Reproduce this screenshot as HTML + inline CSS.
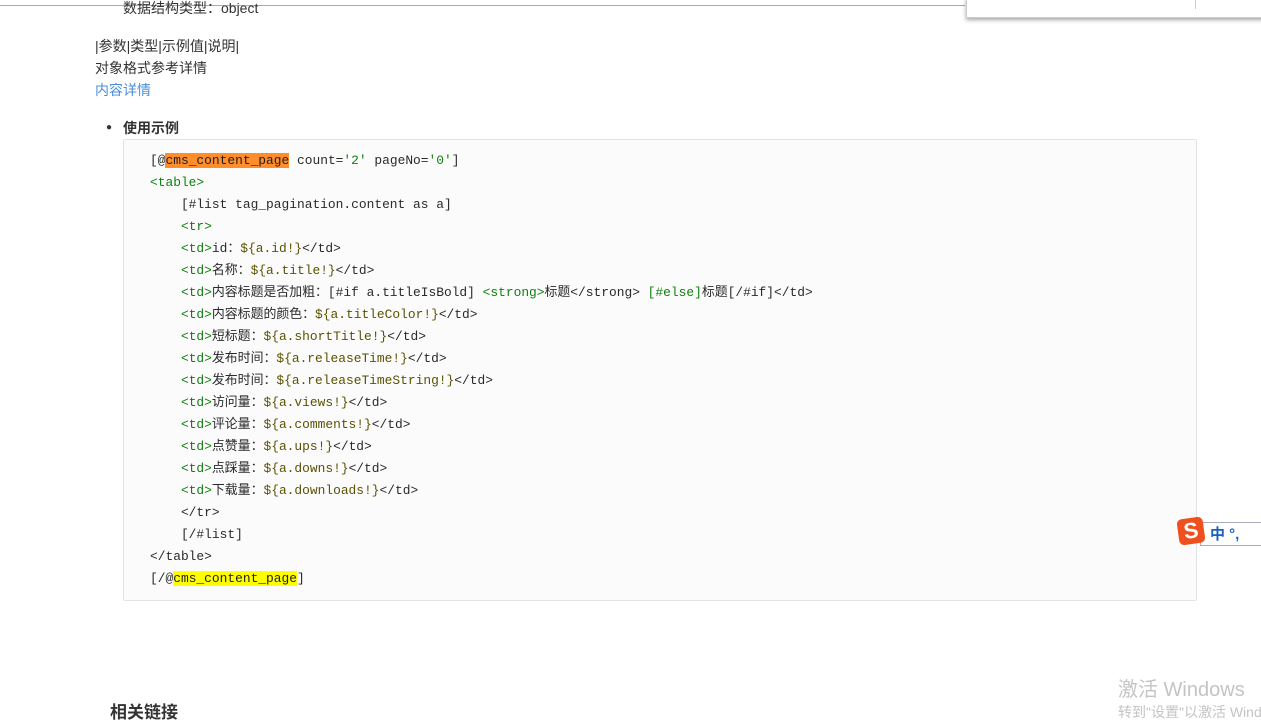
<!DOCTYPE html>
<html><head><meta charset="utf-8"><style>
body{margin:0;width:1261px;height:713px;overflow:hidden;background:#fff;position:relative;font-family:"Liberation Sans","Noto Sans CJK SC",sans-serif;font-size:14px;color:#333}
.topline{position:absolute;left:0;top:5px;width:965px;height:1px;background:#aaa}
.popup{position:absolute;left:966px;top:-2px;width:300px;height:18px;background:#fff;border:1px solid #ccc;box-shadow:0 2px 4px rgba(0,0,0,.35)}
.popup i{position:absolute;left:228px;top:0;width:1px;height:10px;background:#ccc}
.t{position:absolute;white-space:nowrap;line-height:20px}
.code{position:absolute;left:123px;top:139px;width:1072px;height:460px;background:#fbfbfb;border:1px solid #e3e3e3;border-radius:2px}
pre{margin:0;position:absolute;left:26px;top:10px;font-family:"Liberation Mono","Noto Sans CJK SC",monospace;font-size:12.9px;line-height:22px;color:#2a2a2a}
.g{color:#108010}.v{color:#5a5200}.o{background:#ff8d2a;color:#222}.y{background:#ffff00;color:#222}
.ime{position:absolute;left:1178px;top:518px;width:90px;height:28px}
.wm{position:absolute;left:1118px;top:673px;font-size:20px;color:#c4c4c4;white-space:nowrap}
.wm2{position:absolute;left:1118px;top:702px;font-size:14px;color:#c4c4c4;white-space:nowrap}
</style></head><body>
<div class="topline"></div>
<div class="t" style="left:123px;top:-2px">数据结构类型：object</div>
<div class="popup"><i></i></div>
<div class="t" style="left:95px;top:36px">|参数|类型|示例值|说明|</div>
<div class="t" style="left:95px;top:58px">对象格式参考详情</div>
<div class="t" style="left:95px;top:80px;color:#4a8fd8">内容详情</div>
<div class="t" style="left:106px;top:118px;font-size:10px">●</div>
<div class="t" style="left:123px;top:118px;font-weight:bold">使用示例</div>
<div class="code"><pre>[@<span class="o">cms_content_page</span> count=<span class="g">'2'</span> pageNo=<span class="g">'0'</span>]
<span class="g">&lt;table&gt;</span>
    [#list tag_pagination.content as a]
    <span class="g">&lt;tr&gt;</span>
    <span class="g">&lt;td&gt;</span>id：<span class="v">${a.id!}</span>&lt;/td&gt;
    <span class="g">&lt;td&gt;</span>名称：<span class="v">${a.title!}</span>&lt;/td&gt;
    <span class="g">&lt;td&gt;</span>内容标题是否加粗：[#if a.titleIsBold] <span class="g">&lt;strong&gt;</span>标题&lt;/strong&gt; <span class="g">[#else]</span>标题[/#if]&lt;/td&gt;
    <span class="g">&lt;td&gt;</span>内容标题的颜色：<span class="v">${a.titleColor!}</span>&lt;/td&gt;
    <span class="g">&lt;td&gt;</span>短标题：<span class="v">${a.shortTitle!}</span>&lt;/td&gt;
    <span class="g">&lt;td&gt;</span>发布时间：<span class="v">${a.releaseTime!}</span>&lt;/td&gt;
    <span class="g">&lt;td&gt;</span>发布时间：<span class="v">${a.releaseTimeString!}</span>&lt;/td&gt;
    <span class="g">&lt;td&gt;</span>访问量：<span class="v">${a.views!}</span>&lt;/td&gt;
    <span class="g">&lt;td&gt;</span>评论量：<span class="v">${a.comments!}</span>&lt;/td&gt;
    <span class="g">&lt;td&gt;</span>点赞量：<span class="v">${a.ups!}</span>&lt;/td&gt;
    <span class="g">&lt;td&gt;</span>点踩量：<span class="v">${a.downs!}</span>&lt;/td&gt;
    <span class="g">&lt;td&gt;</span>下载量：<span class="v">${a.downloads!}</span>&lt;/td&gt;
    &lt;/tr&gt;
    [/#list]
&lt;/table&gt;
[/@<span class="y">cms_content_page</span>]</pre></div>
<div class="ime">
<div style="position:absolute;left:22px;top:4px;width:70px;height:22px;border:1px solid #aab;background:#fff"></div>
<div style="position:absolute;left:0;top:0;width:26px;height:26px;background:#f0501e;border-radius:5px;transform:rotate(-8deg);color:#fff;font-weight:bold;font-size:22px;line-height:26px;text-align:center">S</div>
<div style="position:absolute;left:32px;top:5px;color:#1a5fc0;font-weight:bold;font-size:15px">中 °,</div>
</div>
<div class="wm">激活 Windows</div>
<div class="wm2">转到"设置"以激活 Windows。</div>
<div class="t" style="left:110px;top:703px;font-weight:bold;font-size:17px">相关链接</div>
</body></html>
